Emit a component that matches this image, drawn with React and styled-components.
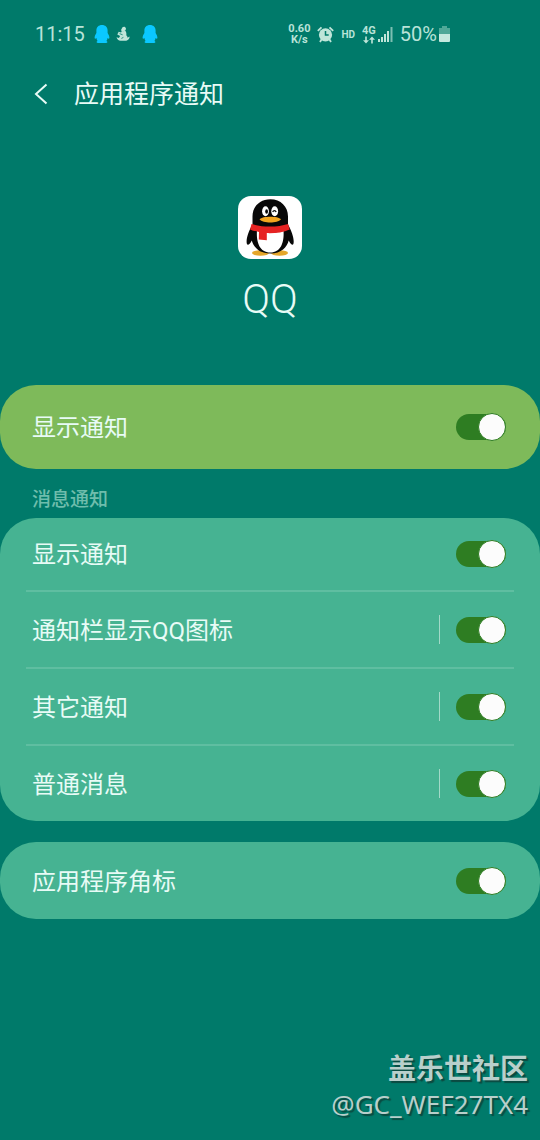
import React, { useState } from 'react';
import styled, { createGlobalStyle } from 'styled-components';

const channels = [
    { id: 'show', label: '显示通知' },
    { id: 'icon', label: '通知栏显示QQ图标', split: true },
    { id: 'other', label: '其它通知', split: true },
    { id: 'normal', label: '普通消息', split: true },
];

function MiniPenguin() {
    return (
        <svg width="16" height="20" viewBox="0 0 16 20" aria-hidden="true">
            <path
                fill="#0ac8ff"
                d="M8 1C4.700 1 2.400 3.200 2.400 6.400V9C1.400 10.500.700 12 .600 13.600c0 1.200.5 1.500 1.100 1l.7-.6c.2 1.200.6 2.200 1.200 2.900-.7.3-1.200.8-1 1.400.2.500.9.700 1.900.700h7c1 0 1.700-.2 1.900-.7.2-.6-.3-1.100-1-1.400.6-.7 1-1.700 1.200-2.900l.7.6c.6.5 1.100.2 1.100-1-.1-1.600-.8-3.100-1.800-4.600V6.400C13.600 3.200 11.300 1 8 1z"
            />
        </svg>
    );
}

function Figure() {
    return (
        <svg width="14" height="16" viewBox="0 0 14 16" fill="#bfe5d9" aria-hidden="true">
            <path d="M6.500 1.200C7.500.200 9.600.500 9.900 2.200c.2 1.200-.3 2-1 2.600L6.200 6C5 5.200 5.600 4.400 5 4z" />
            <path d="M5.800 5.600l3.500-.8c1.300 1.800 1.200 3.200 1 4.400.9.900 1.300 1.600 1.200 2.600l2-1.300c.4 1.800-1 3.600-3.200 4.200H4.600C2.600 14.500 1 13.200.500 11.200l2.400.7 1.200-1.900-2.800-1.600 1.400-2.600L5 6.600z" />
            <path d="M3.600 7.600l3 1.200M5.400 12.400l2-1" stroke="#007a6a" strokeWidth="0.800" />
        </svg>
    );
}

function AlarmIcon() {
    return (
        <svg width="17" height="17" viewBox="0 0 17 17" aria-hidden="true">
            <g fill="none" stroke="#bfe5d9" strokeWidth="1.800">
                <path d="M.8 4.800L4.500 1.300M12.500 1.300l3.700 3.500" />
                <path d="M4.500 13.500L3 16M12.500 13.500L14 16" />
            </g>
            <circle cx="8.500" cy="8.800" r="6.600" fill="#bfe5d9" />
            <path d="M8.500 5v4h3.200" fill="none" stroke="#007a6a" strokeWidth="1.500" />
        </svg>
    );
}

function DataArrows() {
    return (
        <svg width="12" height="8" viewBox="0 0 12 8" fill="#bfe5d9" aria-hidden="true">
            <path d="M2.200.500h1.600V4.300H6L3 7.500 0 4.300h2.200zM8.200 7.500h1.600V3.700H12L9 .500 6 3.700h2.200z" />
        </svg>
    );
}

function SignalIcon() {
    return (
        <svg width="15" height="16" viewBox="0 0 15 16" fill="#bfe5d9" aria-hidden="true">
            <path d="M0 13h2v3H0zM3 11h2v5H3zM6 8h2v8H6zM9 5h2v11H9z" />
            <path d="M12.500 1h2v15h-2z" opacity=".65" />
        </svg>
    );
}

function BatteryIcon() {
    return (
        <svg width="11" height="16" viewBox="0 0 11 16" aria-hidden="true">
            <path fill="#4fa898" d="M3 0h5v2h3v7H0V2h3z" />
            <path fill="#c5e9df" d="M0 8h11v7a1 1 0 0 1-1 1H1a1 1 0 0 1-1-1z" />
        </svg>
    );
}

function QQLogo() {
    return (
        <svg width="64" height="63" viewBox="0 0 64 63" aria-hidden="true">
            <rect width="64" height="63" rx="13" fill="#fff" />
            <ellipse cx="22.500" cy="57" rx="8.500" ry="2.700" fill="#e5a62a" />
            <ellipse cx="41.500" cy="57" rx="8.500" ry="2.700" fill="#e5a62a" />
            <path
                fill="#080808"
                d="M32.300 3.300C21.800 3.300 14.500 10.600 14.500 20.500v8c-3.500 6-5.900 12.500-5.900 17 0 4.500 2.200 4.600 5.200-1C15.500 51 21 57.500 32.300 57.500S49 51 50.700 44.500c3 5.600 5 5.500 5 1 0-4.500-2.400-11-5.700-17v-8c0-9.900-7.200-17.200-17.700-17.200z"
            />
            <path fill="#fff" d="M19 34c8 4 18 4 26.500 0 1 13-3 22.500-13.200 22.500S18 47 19 34z" />
            <ellipse cx="27.500" cy="15.300" rx="3.400" ry="5" fill="#fff" />
            <ellipse cx="36.700" cy="15.300" rx="3.400" ry="5" fill="#fff" />
            <ellipse cx="28.600" cy="15.500" rx="1.400" ry="2.200" fill="#080808" />
            <path d="M34.700 16c.7-1.800 2.800-1.800 3.400 0" fill="none" stroke="#080808" strokeWidth="1.300" />
            <path fill="#f2a51f" d="M21.500 23.200c3-3.300 18.500-3.300 21.500 0-3.500 4.300-18 4.300-21.500 0z" />
            <path
                fill="#e62222"
                d="M13.500 28c11 3.400 26 3.400 36.600 0l1.600 5.400c-6.600 3.100-15.700 4-22.900 3.700v7.100l-8-.6.200-7.700c-3.300-.5-6.200-1.200-8.900-2.500z"
            />
        </svg>
    );
}

function Toggle({ id }) {
    const [on, setOn] = useState(true);
    return <Switch id={id} type="checkbox" checked={on} onChange={() => setOn(!on)} />;
}

function App() {
    return (
        <Page>
            <GlobalStyle />
            <StatusBar>
                <StatusLeft>
                    <StatusText>11:15</StatusText>
                    <LeftIcons>
                        <MiniPenguin />
                        <Figure />
                    </LeftIcons>
                    <MiniPenguin />
                </StatusLeft>
                <StatusRight>
                    <Tiny>
                        <span>0.60</span>
                        <span>K/s</span>
                    </Tiny>
                    <AlarmIcon />
                    <Tiny $small>HD</Tiny>
                    <Network>
                        <Tiny>
                            <span>4G</span>
                            <DataArrows />
                        </Tiny>
                        <SignalIcon />
                    </Network>
                    <Battery>
                        <StatusText>50%</StatusText>
                        <BatteryIcon />
                    </Battery>
                </StatusRight>
            </StatusBar>

            <Header>
                <BackButton type="button" aria-label="返回">
                    <svg width="14" height="22" viewBox="0 0 14 22" fill="none" stroke="#e8fbf6" strokeWidth="2">
                        <path d="M12.500 1.500L2 11l10.500 9.500" />
                    </svg>
                </BackButton>
                <Title>应用程序通知</Title>
            </Header>

            <AppInfo>
                <QQLogo />
                <AppName>QQ</AppName>
            </AppInfo>

            <main>
                <Card $main>
                    <Row $tall>
                        <RowLabel htmlFor="all">显示通知</RowLabel>
                        <Toggle id="all" />
                    </Row>
                </Card>
                <SectionTitle>消息通知</SectionTitle>
                <Card>
                    {channels.map((item) => (
                        <Row key={item.id} $first={!item.split}>
                            <RowLabel htmlFor={item.id}>{item.label}</RowLabel>
                            {item.split && <Split />}
                            <Toggle id={item.id} />
                        </Row>
                    ))}
                </Card>
                <Card $spaced>
                    <Row>
                        <RowLabel htmlFor="badge">应用程序角标</RowLabel>
                        <Toggle id="badge" />
                    </Row>
                </Card>
            </main>

            <Watermark>
                <Community>盖乐世社区</Community>
                <UserName>@GC_WEF27TX4</UserName>
            </Watermark>
        </Page>
    );
}

export default App;

const GlobalStyle = createGlobalStyle`
  * {
    box-sizing: border-box;
  }
  body {
    margin: 0;
    background: #007a6a;
    font-family: Roboto, "Noto Sans CJK SC", sans-serif;
  }
  svg {
    display: block;
    flex-shrink: 0;
  }
`;

const Page = styled.div`
  display: flex;
  flex-direction: column;
  min-height: 100vh;
  background: #007a6a;
  color: #e8fbf6;
`;

const StatusBar = styled.div`
  display: flex;
  align-items: center;
  justify-content: space-between;
  height: 68px;
  padding: 0 90px 0 35px;
  color: #b9e3d8;
`;

const StatusLeft = styled.div`
  display: flex;
  align-items: center;
  gap: 12px;
`;

const LeftIcons = styled.div`
  display: flex;
  align-items: center;
  gap: 6px;
  margin-left: -3px;
`;

const StatusRight = styled.div`
  display: flex;
  align-items: center;
  gap: 7px;
`;

const StatusText = styled.span`
  font-size: 20px;
  line-height: 24px;
`;

const Tiny = styled.span`
  display: flex;
  flex-direction: column;
  align-items: center;
  font-size: ${(props) => (props.$small ? '10px' : '11px')};
  font-weight: 700;
  line-height: 11px;
`;

const Network = styled.div`
  display: flex;
  align-items: center;
  gap: 2px;
`;

const Battery = styled.div`
  display: flex;
  align-items: center;
  gap: 2px;
`;

const Header = styled.header`
  display: flex;
  align-items: center;
  gap: 26px;
  height: 52px;
  padding: 0 34px;
`;

const BackButton = styled.button`
  padding: 0;
  border: 0;
  background: none;
  cursor: pointer;
`;

const Title = styled.h1`
  margin: 0;
  padding-top: 2px;
  font-size: 25px;
  font-weight: 400;
  line-height: 36px;
`;

const AppInfo = styled.section`
  display: flex;
  flex-direction: column;
  align-items: center;
  padding: 76px 0 62px;
`;

const AppName = styled.h2`
  margin: 16px 0 0;
  font-size: 41px;
  font-weight: 300;
  line-height: 48px;
`;

const Card = styled.section`
  margin-top: ${(props) => (props.$spaced ? '21px' : '0')};
  padding: 0 26px;
  border-radius: 36px;
  background: ${(props) => (props.$main ? '#7eba5a' : '#46b392')};
`;

const rowHeight = (props) => {
    if (props.$tall) return '84px';
    return props.$first ? '72px' : '77px';
};

const Row = styled.div`
  display: flex;
  align-items: center;
  height: ${rowHeight};
  padding: 0 8px 0 6px;

  & + & {
    border-top: 2px solid #5fbea1;
  }
`;

const RowLabel = styled.label`
  flex: 1;
  padding-top: 2px;
  font-size: 24px;
  line-height: 36px;
`;

const Split = styled.span`
  width: 1px;
  height: 29px;
  margin-right: 16px;
  background: #a3d9c8;
`;

const Switch = styled.input`
  appearance: none;
  display: flex;
  align-items: center;
  justify-content: ${(props) => (props.checked ? 'flex-end' : 'flex-start')};
  width: 50px;
  height: 26px;
  margin: 0;
  border-radius: 13px;
  background: #2e7d22;
  cursor: pointer;

  &::after {
    content: '';
    flex-shrink: 0;
    box-sizing: border-box;
    width: 28px;
    height: 28px;
    border: 1px solid #2e7d22;
    border-radius: 50%;
    background: #fcfcfc;
  }
`;

const SectionTitle = styled.h3`
  margin: 0;
  padding: 17px 32px 4px;
  color: #6fbdac;
  font-size: 19px;
  font-weight: 500;
  line-height: 28px;
`;

const Watermark = styled.footer`
  display: flex;
  flex-direction: column;
  align-items: flex-end;
  margin-top: auto;
  padding: 0 12px 20px;
  color: #b8cfcb;
  text-shadow: 2px 2px 1px #0b4a41;
`;

const Community = styled.span`
  font-size: 28px;
  font-weight: 700;
  line-height: 36px;
`;

const UserName = styled.span`
  font-family: "Noto Sans", sans-serif;
  font-size: 26px;
  line-height: 32px;
`;
